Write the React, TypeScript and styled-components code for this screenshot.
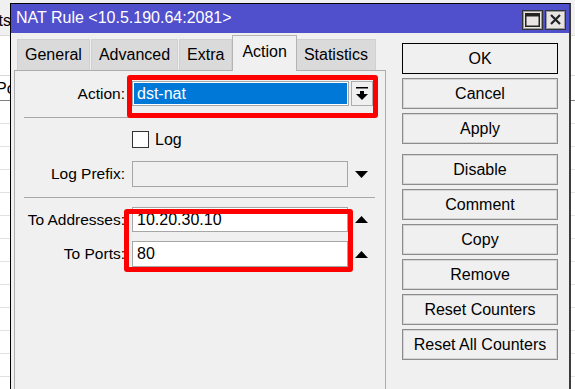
import styled, { createGlobalStyle } from 'styled-components'

const GlobalStyle = createGlobalStyle`
  html, body {
    margin: 0;
    padding: 0;
    background: #ffffff;
    overflow: hidden;
  }
  body {
    font-family: "Liberation Sans", Arial, sans-serif;
    color: #000;
  }
`

const Desktop = styled.div`
  position: relative;
  width: 575px;
  height: 389px;
  overflow: hidden;
  background: #ffffff;
`

/* list window lying behind the dialog */
const BgList = styled.div`
  display: flex;
  flex-direction: column;
`

const BgToolbar = styled.div`
  height: 36px;
  background: #f0f0f0;
  border-bottom: 1px solid #dadada;
  display: flex;
  align-items: center;
  padding-top: 6px;
  box-sizing: border-box;
  font-size: 16px;
`

const BgGap = styled.div`
  height: 39px;
  border-bottom: 1px solid #d8d8d8;
`

const BgHeader = styled.div`
  height: 25px;
  border-bottom: 1px solid #7f7f7f;
  display: flex;
  align-items: center;
  font-size: 16px;
  padding-top: 2px;
  box-sizing: border-box;
`

const BgCell = styled.div<{ $end?: boolean }>`
  width: 11px;
  overflow: hidden;
  white-space: nowrap;
  display: flex;
  justify-content: ${(p) => (p.$end ? 'flex-end' : 'flex-start')};
`

const BgCellText = styled.span<{ $shift?: number }>`
  margin-left: ${(p) => p.$shift ?? 0}px;
`

const BgRow = styled.div`
  height: 22px;
  border-bottom: 1px solid #e2e2e2;
`

/* the dialog window */
const Window = styled.div`
  position: absolute;
  left: 10px;
  top: 3px;
  width: 561px;
  height: 400px;
  box-sizing: border-box;
  border: 1px solid #000;
  border-right: 2px solid #3c3c3c;
  background: #f0f0f0;
  display: flex;
  flex-direction: column;
`

const TitleBar = styled.div`
  height: 29px;
  background: #5050cc;
  color: #fff;
  display: flex;
  align-items: center;
  padding-left: 5px;
  padding-right: 3px;
  font-size: 16px;
`

const TitleText = styled.div`
  flex: 1;
  padding-bottom: 1px;
`

const TitleButtons = styled.div`
  display: flex;
  gap: 2px;
  margin-top: 2px;
`

const TitleButton = styled.div`
  width: 21px;
  height: 20px;
  box-sizing: border-box;
  background: #e8e4e4;
  border: 1px solid #333;
  box-shadow: inset 0 0 0 1px #9a9a9a;
  display: flex;
  align-items: center;
  justify-content: center;
`

const Body = styled.div`
  flex: 1;
  display: flex;
  padding: 2px 11px 0 3px;
`

const LeftCol = styled.div`
  width: 372px;
  display: flex;
  flex-direction: column;
`

const TabStrip = styled.div`
  height: 35px;
  display: flex;
  align-items: flex-end;
  padding-left: 3px;
`

const Tab = styled.div<{ $active?: boolean }>`
  box-sizing: border-box;
  height: ${(p) => (p.$active ? '36px' : '31px')};
  margin: ${(p) => (p.$active ? '0 -1px -1px -1px' : '0 1px 0 0')};
  padding: ${(p) => (p.$active ? '0 9px 4px' : '0 7px')};
  background: ${(p) => (p.$active ? '#f0f0f0' : '#dadada')};
  border: 1px solid ${(p) => (p.$active ? '#b4b4b4' : '#d0d0d0')};
  border-bottom: none;
  font-size: 16px;
  display: flex;
  align-items: center;
  position: relative;
  z-index: ${(p) => (p.$active ? 1 : 0)};
`

const Panel = styled.div`
  position: relative;
  flex: 1;
  border: 1px solid #adadad;
  background: #f0f0f0;
  padding-top: 10px;
  display: flex;
  flex-direction: column;
`

const Row = styled.div<{ $h: number; $mt?: number }>`
  height: ${(p) => p.$h}px;
  margin-top: ${(p) => p.$mt ?? 0}px;
  display: flex;
  align-items: center;
`

const Label = styled.div`
  width: 110px;
  text-align: right;
  font-size: 15.5px;
  margin-right: 7px;
  white-space: nowrap;
`

const Field = styled.div<{ $disabled?: boolean }>`
  box-sizing: border-box;
  width: 216px;
  height: 100%;
  border: 1px solid #a6a6a6;
  background: ${(p) => (p.$disabled ? '#f0f0f0' : '#ffffff')};
  font-size: 16px;
  padding-left: 4px;
  display: flex;
  align-items: center;
`

const SelectBox = styled(Field)`
  width: 217px;
  background: #0078d7;
  color: #fff;
  box-shadow: inset 0 0 0 1px #ffffff;
`

const DropButton = styled.div`
  box-sizing: border-box;
  width: 22px;
  height: 100%;
  margin-left: 2px;
  border: 1px solid #adadad;
  background: #f0f0f0;
  display: flex;
  align-items: center;
  justify-content: center;
`

const ArrowCell = styled.div`
  width: 30px;
  display: flex;
  align-items: center;
  padding-left: 7px;
  box-sizing: border-box;
`

const Separator = styled.div<{ $mt: number; $mb: number }>`
  height: 1px;
  background: #a8a8a8;
  margin: ${(p) => p.$mt}px 10px ${(p) => p.$mb}px 9px;
`

const CheckBox = styled.div`
  box-sizing: border-box;
  width: 17px;
  height: 17px;
  border: 1px solid #333;
  background: #fff;
  margin-left: 117px;
`

const CheckText = styled.span`
  font-size: 16px;
  margin-left: 6px;
`

const Highlight = styled.div<{ $x: number; $y: number; $w: number; $h: number }>`
  position: absolute;
  left: ${(p) => p.$x}px;
  top: ${(p) => p.$y}px;
  width: ${(p) => p.$w}px;
  height: ${(p) => p.$h}px;
  box-sizing: border-box;
  border: 5px solid #ff0000;
  border-radius: 3px;
  pointer-events: none;
  z-index: 2;
`

const RightCol = styled.div`
  margin-left: 16px;
  width: 156px;
  padding-top: 8px;
  display: flex;
  flex-direction: column;
  gap: 4px;
`

const Button = styled.div<{ $default?: boolean; $spaced?: boolean }>`
  box-sizing: border-box;
  height: 31px;
  margin-top: ${(p) => (p.$spaced ? '6px' : '0')};
  border: 1px solid ${(p) => (p.$default ? '#000' : '#8c8c8c')};
  box-shadow: ${(p) => (p.$default ? 'none' : 'inset 0 0 0 1px #d4d4d4')};
  background: #f0f0f0;
  font-size: 16px;
  display: flex;
  align-items: center;
  justify-content: center;
  white-space: nowrap;
`

function TriangleDown() {
  return (
    <svg width="13" height="7" viewBox="0 0 13 7">
      <polygon points="0,0 13,0 6.5,7" fill="#000" />
    </svg>
  )
}

function TriangleUp() {
  return (
    <svg width="13" height="7" viewBox="0 0 13 7">
      <polygon points="0,7 13,7 6.5,0" fill="#000" />
    </svg>
  )
}

function DropIcon() {
  return (
    <svg width="12" height="14" viewBox="0 0 12 14">
      <rect x="0" y="0" width="12" height="1.5" fill="#000" />
      <rect x="4" y="4" width="4" height="3" fill="#000" />
      <polygon points="0,7 12,7 6,13" fill="#000" />
    </svg>
  )
}

function MaximizeIcon() {
  return (
    <svg width="15" height="14" viewBox="0 0 15 14">
      <rect x="0.75" y="0.75" width="13.5" height="12.5" fill="none" stroke="#222" strokeWidth="1.5" />
      <rect x="0" y="0" width="15" height="3.5" fill="#222" />
    </svg>
  )
}

function CloseIcon() {
  return (
    <svg width="11" height="11" viewBox="0 0 11 11">
      <path d="M1 1 L10 10 M10 1 L1 10" stroke="#222" strokeWidth="2.2" />
    </svg>
  )
}

const tabs = ['General', 'Advanced', 'Extra', 'Action', 'Statistics']
const buttons = [
  'OK',
  'Cancel',
  'Apply',
  'Disable',
  'Comment',
  'Copy',
  'Remove',
  'Reset Counters',
  'Reset All Counters',
]

export default function App() {
  return (
    <Desktop>
      <GlobalStyle />
      <BgList>
        <BgToolbar>
          <BgCell $end>Lists</BgCell>
        </BgToolbar>
        <BgGap />
        <BgHeader>
          <BgCell>
            <BgCellText $shift={-4}>Port</BgCellText>
          </BgCell>
        </BgHeader>
        {Array.from({ length: 13 }).map((_, i) => (
          <BgRow key={i} />
        ))}
      </BgList>

      <Window>
        <TitleBar>
          <TitleText>NAT Rule &lt;10.5.190.64:2081&gt;</TitleText>
          <TitleButtons>
            <TitleButton>
              <MaximizeIcon />
            </TitleButton>
            <TitleButton>
              <CloseIcon />
            </TitleButton>
          </TitleButtons>
        </TitleBar>

        <Body>
          <LeftCol>
            <TabStrip>
              {tabs.map((t) => (
                <Tab key={t} $active={t === 'Action'}>
                  {t}
                </Tab>
              ))}
            </TabStrip>
            <Panel>
              <Row $h={25}>
                <Label>Action:</Label>
                <SelectBox>dst-nat</SelectBox>
                <DropButton>
                  <DropIcon />
                </DropButton>
              </Row>
              <Separator $mt={11} $mb={13} />
              <Row $h={17}>
                <CheckBox />
                <CheckText>Log</CheckText>
              </Row>
              <Row $h={26} $mt={13}>
                <Label>Log Prefix:</Label>
                <Field $disabled />
                <ArrowCell>
                  <TriangleDown />
                </ArrowCell>
              </Row>
              <Separator $mt={10} $mb={9} />
              <Row $h={25}>
                <Label>To Addresses:</Label>
                <Field>10.20.30.10</Field>
                <ArrowCell>
                  <TriangleUp />
                </ArrowCell>
              </Row>
              <Row $h={26} $mt={9}>
                <Label>To Ports:</Label>
                <Field>80</Field>
                <ArrowCell>
                  <TriangleUp />
                </ArrowCell>
              </Row>

              <Highlight $x={112} $y={4} $w={251} $h={43} />
              <Highlight $x={109} $y={138} $w={229} $h={63} />
            </Panel>
          </LeftCol>

          <RightCol>
            {buttons.map((b) => (
              <Button key={b} $default={b === 'OK'} $spaced={b === 'Disable'}>
                {b}
              </Button>
            ))}
          </RightCol>
        </Body>
      </Window>
    </Desktop>
  )
}
